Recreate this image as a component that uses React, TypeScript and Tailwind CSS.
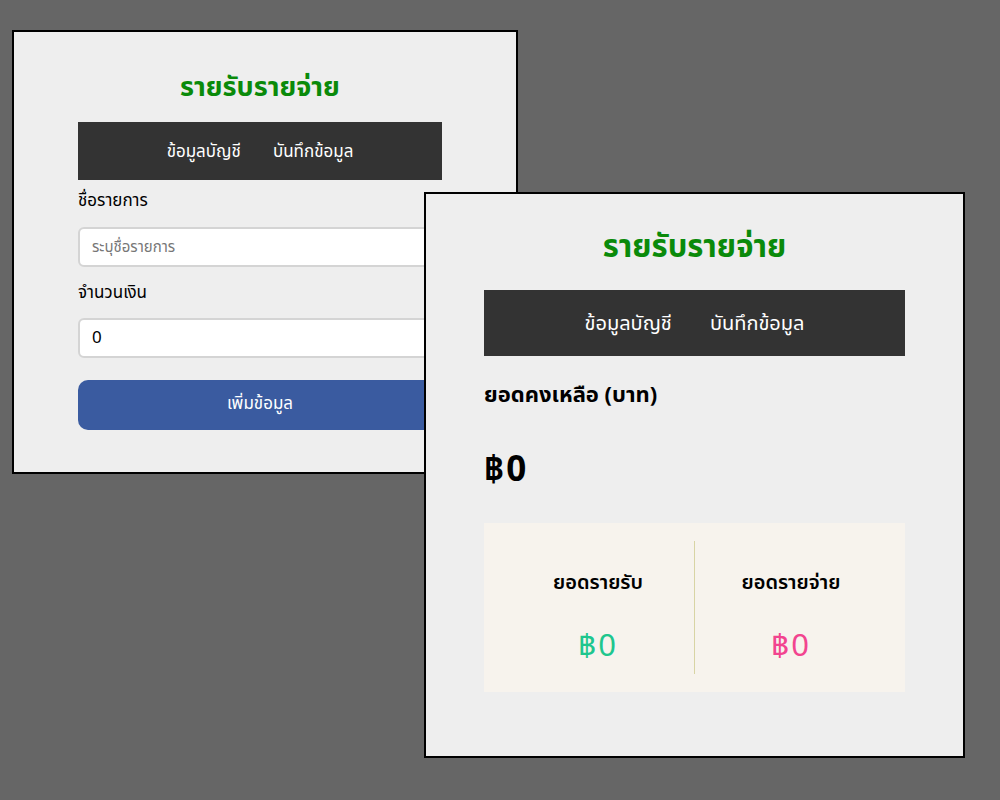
const thai = "font-['Noto_Sans_Thai','Noto_Sans',sans-serif]";

function NavBar({ big }: { big?: boolean }) {
  return (
    <div
      className={
        big
          ? "flex h-[66px] items-center justify-center gap-[38px] bg-[#333333] pt-[2px] text-[20px] text-white"
          : "flex h-[58px] items-center justify-center gap-[32px] bg-[#333333] pt-[3px] text-[17px] text-white"
      }
    >
      <span>ข้อมูลบัญชี</span>
      <span>บันทึกข้อมูล</span>
    </div>
  );
}

function FormWindow() {
  return (
    <div className="absolute left-[12px] top-[30px] h-[444px] w-[506px] border-2 border-black bg-[#eeeeee] px-[64px]">
      <div className="w-[364px]">
        <h1 className="mt-[36px] h-[40px] text-center text-[27px] font-bold leading-[40px] text-[#0a8a0a]">
          รายรับรายจ่าย
        </h1>
        <div className="mt-[14px]">
          <NavBar />
        </div>
        <label className="mt-[8px] block h-[26px] text-[17px] leading-[26px] text-black">ชื่อรายการ</label>
        <input
          className="mt-[13px] h-[40px] w-full rounded-[6px] border-2 border-[#d4d4d4] bg-white px-[12px] text-[15px] text-black outline-none placeholder:text-[#777]"
          placeholder="ระบุชื่อรายการ"
        />
        <label className="mt-[13px] block h-[26px] text-[17px] leading-[26px] text-black">จำนวนเงิน</label>
        <input
          className="mt-[12px] h-[40px] w-full rounded-[6px] border-2 border-[#d4d4d4] bg-white px-[12px] text-[17px] text-black outline-none"
          defaultValue="0"
        />
        <button className="mt-[22px] h-[50px] w-full rounded-[10px] bg-[#3a5ba0] text-[17px] text-white">
          เพิ่มข้อมูล
        </button>
      </div>
    </div>
  );
}

function SummaryWindow() {
  return (
    <div className="absolute left-[424px] top-[192px] h-[566px] w-[541px] border-2 border-black bg-[#eeeeee] px-[58px]">
      <h1 className="mt-[34px] h-[40px] text-center text-[31px] font-bold leading-[40px] text-[#0a8a0a]">
        รายรับรายจ่าย
      </h1>
      <div className="mt-[22px]">
        <NavBar big />
      </div>
      <h2 className="mt-[24px] h-[32px] text-[22px] font-bold leading-[32px] text-black">ยอดคงเหลือ (บาท)</h2>
      <div className="mt-[39px] h-[40px] text-[35px] font-bold leading-[40px] tracking-[2px] text-black">฿0</div>
      <div className="mt-[32px] flex h-[169px] items-center bg-[#f7f3ed] px-[18px] py-[18px]">
        <div className="flex h-full flex-1 flex-col items-center pt-[28px]">
          <span className="h-[28px] text-[20px] font-semibold leading-[28px] text-black">ยอดรายรับ</span>
          <span className="mt-[32px] h-[36px] text-[31px] leading-[36px] tracking-[2px] text-[#1ec68e]">฿0</span>
        </div>
        <div className="h-full w-px bg-[#d8d4a4]" />
        <div className="flex h-full flex-1 flex-col items-center pt-[28px]">
          <span className="h-[28px] text-[20px] font-semibold leading-[28px] text-black">ยอดรายจ่าย</span>
          <span className="mt-[32px] h-[36px] text-[31px] leading-[36px] tracking-[2px] text-[#f2448f]">฿0</span>
        </div>
      </div>
    </div>
  );
}

export default function App() {
  return (
    <div className={`relative h-[800px] w-[1000px] overflow-hidden bg-[#666666] ${thai}`}>
      <FormWindow />
      <SummaryWindow />
    </div>
  );
}
